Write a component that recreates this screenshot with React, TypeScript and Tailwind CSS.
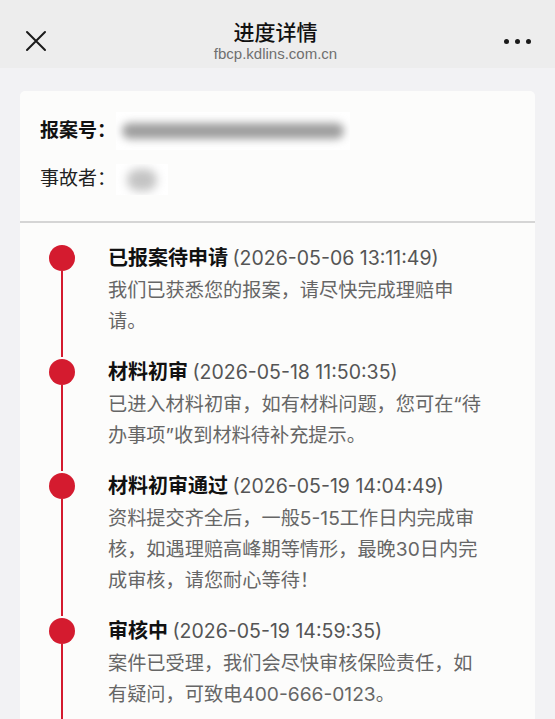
interface Step {
  title: string;
  time: string;
  lines: string[];
}

const steps: Step[] = [
  {
    title: "已报案待申请",
    time: "(2026-05-06 13:11:49)",
    lines: ["我们已获悉您的报案，请尽快完成理赔申", "请。"],
  },
  {
    title: "材料初审",
    time: "(2026-05-18 11:50:35)",
    lines: ["已进入材料初审，如有材料问题，您可在“待", "办事项”收到材料待补充提示。"],
  },
  {
    title: "材料初审通过",
    time: "(2026-05-19 14:04:49)",
    lines: [
      "资料提交齐全后，一般5-15工作日内完成审",
      "核，如遇理赔高峰期等情形，最晚30日内完",
      "成审核，请您耐心等待！",
    ],
  },
  {
    title: "审核中",
    time: "(2026-05-19 14:59:35)",
    lines: ["案件已受理，我们会尽快审核保险责任，如", "有疑问，可致电400-666-0123。"],
  },
];

const font = "font-['Inter','Noto_Sans_CJK_SC',sans-serif]";

function CloseIcon() {
  return (
    <svg width="22" height="22" viewBox="0 0 22 22" className="text-[#1a1a1a]">
      <path d="M2 2 L20 20 M20 2 L2 20" stroke="currentColor" strokeWidth="2" strokeLinecap="round" fill="none" />
    </svg>
  );
}

export default function App() {
  return (
    <div className={`w-[555px] h-[719px] overflow-hidden bg-[#f2f2f4] ${font}`}>
      <header className="h-[68px] bg-[#ededed] flex items-center justify-between pl-[25px] pr-[24px] pt-[14px]">
        <CloseIcon />
        <div className="flex flex-col items-center">
          <h1 className="text-[21px] leading-[26px] font-medium text-[#111]">进度详情</h1>
          <p className="text-[15px] leading-[18px] text-[#6f6f6f] font-['Liberation_Sans',sans-serif] -mt-[1px]">
            fbcp.kdlins.com.cn
          </p>
        </div>
        <div className="flex gap-[6px]">
          <span className="w-[5px] h-[5px] rounded-full bg-[#1a1a1a]" />
          <span className="w-[5px] h-[5px] rounded-full bg-[#1a1a1a]" />
          <span className="w-[5px] h-[5px] rounded-full bg-[#1a1a1a]" />
        </div>
      </header>

      <main className="px-[20px] pt-[23px]">
        <div className="bg-[#fcfcfb] rounded-[5px] min-h-[640px]">
          <section className="pl-[20px] pt-[21px] pb-[26px] flex flex-col gap-[14px]">
            <div className="flex items-center h-[38px]">
              <span className="text-[19px] font-bold text-[#111]">报案号：</span>
              <div className="w-[234px] h-full bg-white flex items-center px-[6px] overflow-hidden">
                <div className="w-full h-[16px] rounded-full bg-[#9e9e9e] blur-[4px]" />
              </div>
            </div>
            <div className="flex items-center h-[31px]">
              <span className="text-[19px] text-[#222]">事故者：</span>
              <div className="w-[52px] h-full bg-white flex items-center justify-center overflow-hidden">
                <div className="w-[30px] h-[22px] rounded-full bg-[#c4c4c4] blur-[5px]" />
              </div>
            </div>
          </section>
          <div className="h-[1.5px] bg-[#d5d5d5]" />

          <ol className="pt-[20px]">
            {steps.map((s) => (
              <li key={s.title} className="flex pb-[20px]">
                <div className="w-[84px] flex flex-col items-center shrink-0 -mb-[20px]">
                  <span className="w-[26px] h-[26px] rounded-full bg-[#d41b2f] mt-[2.5px] shrink-0" />
                  <span className="w-[1.5px] flex-1 bg-[#d41b2f]" />
                </div>
                <div className="ml-[4px] leading-[31px]">
                  <p>
                    <span className="text-[20px] font-bold text-[#111]">{s.title}</span>{" "}
                    <span className="text-[19.5px] text-[#555]">{s.time}</span>
                  </p>
                  {s.lines.map((l) => (
                    <p key={l} className="text-[19.2px] text-[#666] whitespace-nowrap">
                      {l}
                    </p>
                  ))}
                </div>
              </li>
            ))}
          </ol>
        </div>
      </main>
    </div>
  );
}
